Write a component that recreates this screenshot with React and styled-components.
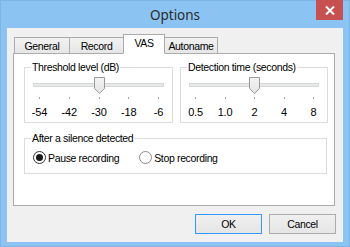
import React from 'react';
import styled, { createGlobalStyle } from 'styled-components';

const GlobalStyle = createGlobalStyle`
  html, body {
    margin: 0;
    padding: 0;
  }
  body {
    font-family: "Liberation Sans", Arial, sans-serif;
    font-size: 10.5px;
    letter-spacing: -0.35px;
    color: #000;
  }
`;

const Window = styled.div`
  width: 350px;
  height: 247px;
  box-sizing: border-box;
  border: 1px solid #7db5e6;
  background: #8bc3f3;
  display: flex;
  flex-direction: column;
`;

const TitleBar = styled.div`
  height: 27px;
  display: grid;
  grid-template-columns: 1fr auto 1fr;
  align-items: center;
`;

const Title = styled.div`
  grid-column: 2;
  font-family: "Noto Sans", "Open Sans", sans-serif;
  font-size: 13.5px;
  letter-spacing: 0;
  color: #2b2b2b;
`;

const CloseButton = styled.div`
  grid-column: 3;
  justify-self: end;
  align-self: start;
  width: 27px;
  height: 20px;
  margin: -1px 6px 0 0;
  background: #c75050;
  color: #fff;
  display: flex;
  align-items: center;
  justify-content: center;
`;

const Client = styled.div`
  flex: 1;
  margin: 0 6px 4px 6px;
  padding: 6px 7px 0 6px;
  background: #f0f0f0;
  display: flex;
  flex-direction: column;
`;

const TabRow = styled.div`
  display: flex;
  align-items: flex-end;
  height: 20px;
  padding-left: 1px;
  margin-bottom: -1px;
  position: relative;
  z-index: 1;
`;

const Tab = styled.div`
  box-sizing: border-box;
  width: ${p => p.$width}px;
  height: ${p => (p.$active ? 20 : 17)}px;
  margin-left: ${p => (p.$first ? 0 : -1)}px;
  border: 1px solid #acacac;
  border-bottom-color: ${p => (p.$active ? '#fff' : '#acacac')};
  background: ${p => (p.$active ? '#fff' : 'linear-gradient(#f2f2f2, #e6e6e6)')};
  display: flex;
  align-items: ${p => (p.$active ? 'flex-start' : 'center')};
  padding-top: ${p => (p.$active ? 2 : 0)}px;
  justify-content: center;
  position: relative;
  z-index: ${p => (p.$active ? 2 : 1)};
`;

const Panel = styled.div`
  height: 153px;
  box-sizing: border-box;
  margin-right: 1px;
  border: 1px solid #acacac;
  background: #fff;
  padding: 7px 7px 0 10px;
  display: flex;
  flex-direction: column;
`;

const GroupRow = styled.div`
  display: grid;
  grid-template-columns: 149px 148px;
  column-gap: 7px;
`;

const Group = styled.fieldset`
  margin: ${p => p.$top || 0}px 0 0 0;
  padding: 0 8px ${p => p.$bottom || 0}px 8px;
  border: 1px solid #dcdcdc;
  min-width: 0;
`;

const Legend = styled.legend`
  padding: 0 1px;
  margin-left: -2px;
  line-height: 12px;
`;

const SliderArea = styled.div`
  position: relative;
  height: 17px;
  margin-top: 4px;
`;

const Track = styled.div`
  position: absolute;
  left: 0;
  right: 0;
  top: 6px;
  height: 2px;
  border: 1px solid #d6d6d6;
  background: #e7eaea;
`;

const Thumb = styled.svg`
  position: absolute;
  top: 0;
  width: 11px;
  height: 17px;
`;

const Ticks = styled.div`
  display: flex;
  justify-content: space-between;
  padding: 0 5px 0 6px;
  margin-top: 3px;
`;

const Tick = styled.div`
  width: 1px;
  height: 2px;
  background: #a8a8a8;
`;

const Labels = styled.div`
  display: flex;
  justify-content: space-between;
  padding: 0 5px 0 6px;
  margin-top: 7px;
  height: 12px;
  line-height: 12px;
  font-size: 11px;
  letter-spacing: -0.2px;
`;

const Label = styled.div`
  width: 1px;
  display: flex;
  justify-content: center;
  white-space: nowrap;
`;

const RadioRow = styled.div`
  display: flex;
  align-items: center;
  gap: 20px;
  margin-top: 7px;
`;

const RadioOption = styled.div`
  display: flex;
  align-items: center;
  gap: 2px;
`;

const RadioCircle = styled.div`
  box-sizing: border-box;
  width: 13px;
  height: 13px;
  border-radius: 50%;
  border: 1px solid ${p => (p.$checked ? '#333' : '#8a8a8a')};
  background: #fff;
  display: flex;
  align-items: center;
  justify-content: center;

  &::after {
    content: '';
    width: 7px;
    height: 7px;
    border-radius: 50%;
    background: ${p => (p.$checked ? '#1a1a1a' : 'transparent')};
  }
`;

const ButtonRow = styled.div`
  display: flex;
  justify-content: flex-end;
  gap: 7px;
  margin-top: 8px;
`;

const Button = styled.div`
  box-sizing: border-box;
  width: 67px;
  height: 20px;
  border: 1px solid ${p => (p.$default ? '#3399ff' : '#acacac')};
  background: linear-gradient(#f0f0f0, #e5e5e5);
  display: flex;
  align-items: center;
  justify-content: center;
`;

const tabs = [
  { name: 'General', width: 56 },
  { name: 'Record', width: 55 },
  { name: 'VAS', width: 42, active: true },
  { name: 'Autoname', width: 54 },
];

const Slider = ({ labels, value }) => {
  const frac = value / (labels.length - 1);
  return (
    <>
      <SliderArea>
        <Track />
        <Thumb
          viewBox="0 0 11 17"
          style={{ left: `calc(${frac * 100}% - ${frac * 11}px + 0.5px)` }}
        >
          <defs>
            <linearGradient id="thumbFill" x1="0" y1="0" x2="0" y2="1">
              <stop offset="0" stopColor="#f4f4f4" />
              <stop offset="1" stopColor="#e3e3e3" />
            </linearGradient>
          </defs>
          <path
            d="M0.5 0.5 H10.5 V11.5 L5.5 16.5 L0.5 11.5 Z"
            fill="url(#thumbFill)"
            stroke="#9a9a9a"
          />
        </Thumb>
      </SliderArea>
      <Ticks>
        {labels.map(l => (
          <Tick key={l} />
        ))}
      </Ticks>
      <Labels>
        {labels.map(l => (
          <Label key={l}>{l}</Label>
        ))}
      </Labels>
    </>
  );
};

const Close = () => (
  <svg width="10" height="9" viewBox="0 0 10 9">
    <path d="M1 0.5 L9 8.5 M9 0.5 L1 8.5" stroke="#fff" strokeWidth="2" />
  </svg>
);

const App = () => (
  <>
    <GlobalStyle />
    <Window>
      <TitleBar>
        <Title>Options</Title>
        <CloseButton>
          <Close />
        </CloseButton>
      </TitleBar>
      <Client>
        <TabRow>
          {tabs.map((t, i) => (
            <Tab key={t.name} $width={t.width} $active={t.active} $first={i === 0}>
              {t.name}
            </Tab>
          ))}
        </TabRow>
        <Panel>
          <GroupRow>
            <Group $bottom={4}>
              <Legend>Threshold level (dB)</Legend>
              <Slider labels={['-54', '-42', '-30', '-18', '-6']} value={2} />
            </Group>
            <Group $bottom={4}>
              <Legend>Detection time (seconds)</Legend>
              <Slider labels={['0.5', '1.0', '2', '4', '8']} value={2} />
            </Group>
          </GroupRow>
          <Group $top={9} $bottom={9}>
            <Legend>After a silence detected</Legend>
            <RadioRow>
              <RadioOption>
                <RadioCircle $checked />
                Pause recording
              </RadioOption>
              <RadioOption>
                <RadioCircle />
                Stop recording
              </RadioOption>
            </RadioRow>
          </Group>
        </Panel>
        <ButtonRow>
          <Button $default>OK</Button>
          <Button>Cancel</Button>
        </ButtonRow>
      </Client>
    </Window>
  </>
);

export default App;
